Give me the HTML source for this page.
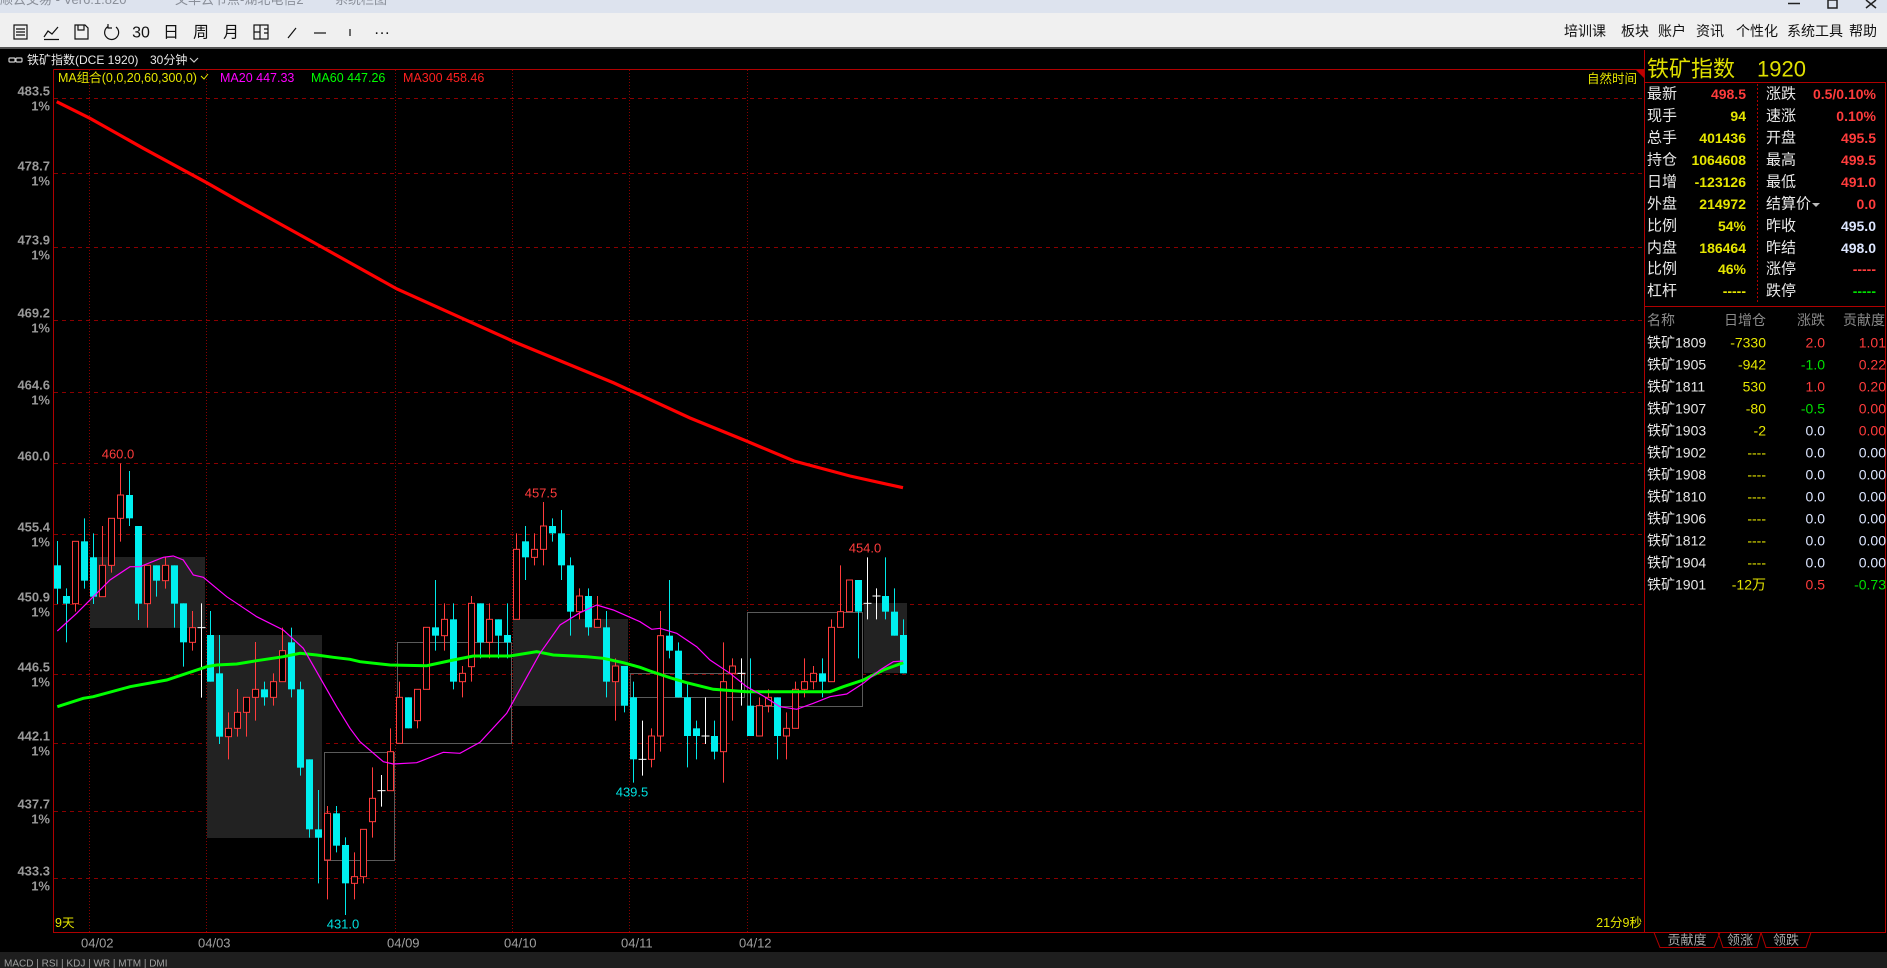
<!DOCTYPE html>
<html><head><meta charset="utf-8"><style>
html,body{margin:0;padding:0;background:#000;overflow:hidden}
svg{display:block}
text{font-family:"Liberation Sans","Noto Sans CJK SC",sans-serif}
</style></head><body>
<svg id="s" width="1887" height="968" viewBox="0 0 1887 968" xmlns="http://www.w3.org/2000/svg">
<rect width="1887" height="968" fill="#000"/>
<rect width="1887" height="13" fill="#dde3ee"/>
<text x="0" y="4" font-size="13" fill="#8a8f99">顺云交易 - Ver6.1.820</text>
<text x="175" y="4" font-size="13" fill="#8a8f99">文华云节点-湖北电信2</text>
<text x="335" y="4" font-size="13" fill="#8a8f99">系统栏图</text>
<g stroke="#222" stroke-width="1.5" fill="none">
<line x1="1788" y1="3.5" x2="1800" y2="3.5"/>
<rect x="1828" y="0" width="9" height="8"/>
<path d="M1866 0 L1876 8 M1876 0 L1866 8"/>
</g>
<rect y="13" width="1887" height="35" fill="#f0f0f0"/>
<rect y="47" width="1887" height="2" fill="#555"/>
<g stroke="#111" stroke-width="1.2" fill="none">
<rect x="14" y="25" width="13" height="14"/><path d="M16 29h9M16 32h9M16 35h9"/>
<path d="M44 37 L48 31 L52 34 L58 27 M44 39.5h15"/>
<path d="M75 25h10l3 3v11h-13z M78 25v5h6v-5"/>
<path d="M116 27 A7 7 0 1 1 108 26.5 M108 24v4h4" />
<rect x="254" y="25" width="14" height="14"/><path d="M260 25v14M260 32h-6M264 29h4M264 33h4"/>
<path d="M288 38 L296 28"/>
<path d="M314 33h12"/>
<path d="M350 29v7"/>
</g>
<g font-size="16" fill="#111" text-anchor="middle" dominant-baseline="central">
<text x="141" y="33">30</text><text x="171" y="33">日</text><text x="201" y="33">周</text><text x="231" y="33">月</text>
<text x="382" y="33">···</text>
</g>
<g font-size="14" fill="#111" dominant-baseline="central">
<text x="1564" y="31">培训课</text><text x="1621" y="31">板块</text><text x="1658" y="31">账户</text><text x="1696" y="31">资讯</text><text x="1736" y="31">个性化</text><text x="1787" y="31">系统工具</text><text x="1849" y="31">帮助</text>
</g>
<g stroke="#ccc" stroke-width="1.2" fill="none"><rect x="9" y="58" width="6" height="4" rx="1"/><rect x="16" y="58" width="6" height="4" rx="1"/><path d="M190 58l4 4 4-4"/></g>
<g font-size="12" fill="#e8e8e8" dominant-baseline="central"><text x="27" y="60">铁矿指数(DCE 1920)</text><text x="150" y="60">30分钟</text></g>
<g id="chart"></g>
<g font-size="12.5" dominant-baseline="central">
<text x="58" y="78" fill="#e6e600">MA组合(0,0,20,60,300,0)</text>
<path d="M201 76l3 3 4-5" stroke="#e6e600" fill="none"/>
<text x="220" y="78" fill="#ff00ff">MA20 447.33</text>
<text x="311" y="78" fill="#00ff00">MA60 447.26</text>
<text x="403" y="78" fill="#ff2020">MA300 458.46</text>
<text x="1587" y="79" fill="#e6e600">自然时间</text>
<text x="1642" y="923" fill="#e6e600" text-anchor="end">21分9秒</text>
<text x="55" y="923" fill="#e6e600">9天</text>
</g>
<path d="M1636 70h8v8z" fill="#c00000"/>
<text x="1647" y="69" font-size="22" fill="#e0e000" dominant-baseline="central">铁矿指数</text>
<text x="1757" y="69" font-size="22" fill="#e0e000" dominant-baseline="central">1920</text>
<g id="panel"></g>
<rect y="952" width="1887" height="16" fill="#1e1e1e"/>
<text x="4" y="964" font-size="10" fill="#a0a0a0" dominant-baseline="central">MACD | RSI | KDJ | WR | MTM | DMI</text>
<g stroke="#b00000" fill="none" stroke-width="1">
<path d="M1654 932.5l6 15h54l6-15M1718 932.5l5 15h34l4-15M1761 932.5l5 15h40l5-15"/>
</g>
<g font-size="13" fill="#aaa" dominant-baseline="central" text-anchor="middle"><text x="1687" y="940">贡献度</text><text x="1740" y="940">领涨</text><text x="1786" y="940">领跌</text></g>
</svg>
<script>
var h=[];
function Y(z){return 440+z/3}
var gl=[98,173,247,320,392,463,534,604,674,743,811,878];
var pl=["483.5","478.7","473.9","469.2","464.6","460.0","455.4","450.9","446.5","442.1","437.7","433.3"];
gl.forEach(function(y,i){h.push('<line x1="54" y1="'+(y+.5)+'" x2="1644" y2="'+(y+.5)+'" stroke="#8a0000" stroke-dasharray="4,4"/>');
h.push('<text x="50" y="'+(y-7)+'" font-size="13" font-weight="bold" fill="#9a9a9a" text-anchor="end" dominant-baseline="central">'+pl[i]+'</text>');
if(i!=5)h.push('<text x="50" y="'+(y+8)+'" font-size="13" font-weight="bold" fill="#9a9a9a" text-anchor="end" dominant-baseline="central">1%</text>');});
var vx=[89,206,395,512,629,747],dl=["04/02","04/03","04/09","04/10","04/11","04/12"];
vx.forEach(function(x,i){h.push('<line x1="'+(x+.5)+'" y1="70" x2="'+(x+.5)+'" y2="932" stroke="#8a0000" stroke-dasharray="1,2"/>');
h.push('<text x="'+(x-8)+'" y="943" font-size="13" fill="#a0a0a0" dominant-baseline="central">'+dl[i]+'</text>');});
[[90,557,115,71,1],[207,635,115,203,1],[513,619,115,87,1],[864,603,43,70,1],[324,752,70,108,0],[397,642,114,101,0],[630,673,114,24,0],[747,612,115,94,0]].forEach(function(b){
if(b[4])h.push('<rect x="'+b[0]+'" y="'+b[1]+'" width="'+b[2]+'" height="'+b[3]+'" fill="#222"/>');
else h.push('<rect x="'+(b[0]+.5)+'" y="'+(b[1]+.5)+'" width="'+b[2]+'" height="'+b[3]+'" fill="none" stroke="#5a5a5a"/>');});
var D="c 376 446 303 492,c 468 491 445 607,r 304 491 304 515,c 304 422 235 446,c 352 470 280 492,r 376 470 258 470,r 235 376 235 398,r 165 235 70 305,c 165 235 93 258,c 258 491 258 540,r 376 491 376 563,c 376 422 376 470,r 376 422 352 446,c 376 491 376 563,c 490 607 490 680,r 563 607 513 632,w 563 563 490 773,c 585 725 513 725,c 700 890 585 912,r 865 890 817 958,r 817 865 747 890,r 772 817 772 890,r 748 772 606 842,c 748 772 725 797,r 725 772 700 797,r 632 725 563 725,c 607 748 563 772,c 748 983 725 1007,c 958 1168 958 1193,c 1168 1193 1050 1330,r 1120 1260 1098 1378,c 1120 1217 1098 1237,c 1215 1330 1192 1425,r 1310 1330 1237 1378,r 1168 1310 1168 1330,r 1075 1145 982 1193,w 1052 1052 1005 1100,r 935 1052 865 1052,r 772 910 725 910,c 772 865 772 865,r 748 842 748 865,r 562 748 562 748,c 562 587 420 632,r 538 587 490 632,c 538 725 490 748,r 700 725 678 772,r 490 680 468 725,c 490 607 490 655,r 538 607 490 655,c 538 587 538 655,c 585 607 490 655,r 328 538 280 538,c 304 352 258 420,r 328 352 280 376,r 258 328 186 376,c 258 280 235 305,c 280 376 210 420,c 376 515 352 587,r 468 515 445 538,c 468 562 445 587,r 538 562 468 562,c 562 725 513 772,r 678 725 655 842,c 678 797 678 817,c 772 958 725 1028,w 958 958 842 1007,r 888 958 865 982,r 587 888 513 935,c 587 632 420 655,c 632 772 607 772,c 772 888 725 982,c 865 888 842 958,w 888 888 772 912,c 888 935 842 958,r 725 935 607 1028,r 678 700 655 842,w 700 700 655 797,c 797 888 655 888,r 797 888 772 888,r 772 797 748 817,c 772 888 772 958,r 865 888 817 958,r 748 865 725 865,r 725 748 655 772,r 700 725 678 748,c 700 725 655 772,r 562 725 538 725,r 515 562 376 562,r 420 515 420 515,c 420 515 420 655,w 490 490 352 538,w 468 468 445 538,c 468 515 352 538,c 515 587 445 587,c 585 700 538 700".split(",");
var cs=[];
D.forEach(function(s,i){var p=s.split(" "),x=Math.round(57.3+9*i)+.5,bt=Y(+p[1]),bb=Y(+p[2]),wt=Y(+p[3]),wb=Y(+p[4]);
if(p[0]=="c"){cs.push('<line x1="'+x+'" y1="'+wt+'" x2="'+x+'" y2="'+wb+'" stroke="#00e8e8"/><rect x="'+(x-3.5)+'" y="'+bt+'" width="7" height="'+Math.max(2,bb-bt)+'" fill="#00f0f0"/>');}
else if(p[0]=="r"){cs.push('<line x1="'+x+'" y1="'+wt+'" x2="'+x+'" y2="'+wb+'" stroke="#ff3c3c"/><rect x="'+(x-3)+'" y="'+bt+'" width="6" height="'+Math.max(1,bb-bt)+'" fill="#000" stroke="#ff3c3c"/>');}
else{cs.push('<line x1="'+x+'" y1="'+wt+'" x2="'+x+'" y2="'+wb+'" stroke="#fff"/><line x1="'+(x-4)+'" y1="'+bt+'" x2="'+(x+4)+'" y2="'+bt+'" stroke="#fff"/>');}});
function pts(arr,bx){var o=[];for(var i=0;i<arr.length;i+=2)o.push((bx+arr[i]/3).toFixed(1)+","+Y(arr[i+1]).toFixed(1));return o.join(" ");}
var g60=pts([22,800,100,775,130,770,240,740,350,720,470,680,500,675,560,672,620,662,700,650,750,640,800,645,850,652,900,658],50)+" "+pts([60,665,150,675,260,677,340,660,400,648,510,648,590,635,640,645,740,650,790,655,850,668,900,682],340)+" "+pts([60,693,120,713,170,728,250,748,350,755,440,755,600,755,640,740,700,720,760,690,820,668],630);
var m20=pts([22,573,80,520,180,420,240,380,270,380,340,352,370,348,400,360,430,405,460,412,530,470,620,530,700,570,760,625,820,730,860,800,900,865],50)+" "+pts([60,905,130,965,160,972,230,968,310,937,360,940,420,907,500,820,550,730,600,640,660,555,720,518,770,495,820,510,900,545],340)+" "+pts([30,545,65,568,90,565,140,580,200,620,240,660,300,700,350,740,400,768,450,800,500,808,550,790,600,770,650,762,700,730,750,690,790,665,820,663],630);
h.push(cs.join(""));
h.push('<polyline points="'+g60+'" fill="none" stroke="#00ff00" stroke-width="3"/>');
h.push('<polyline points="'+m20+'" fill="none" stroke="#ff00ff" stroke-width="1.2"/>');
h.push('<polyline points="56.7,101.7 90,118.3 143.3,148.3 206.7,182.7 240,201.7 320,246 397,289 517,343 614,383 690,418 744,440 794,461 850,476 903,487.7" fill="none" stroke="#ff0000" stroke-width="3.2"/>');
[["460.0",118,454,"#ff3c3c"],["457.5",541,493,"#ff3c3c"],["454.0",865,548,"#ff3c3c"],["439.5",632,792,"#00e0e0"],["431.0",343,924,"#00e0e0"]].forEach(function(t){h.push('<text x="'+t[1]+'" y="'+t[2]+'" font-size="13" fill="'+t[3]+'" text-anchor="middle" dominant-baseline="central">'+t[0]+'</text>');});
h.push('<path d="M53.5 69.5H1644M53.5 69.5V932.5H1644" stroke="#b00000" fill="none"/>');
document.getElementById("chart").innerHTML=h.join("");
var p=[];
p.push('<path d="M1644.5 50V932.5M1885.5 82V932.5M1644 82.5H1886M1644 306.5H1886M1644 932.5H1886" stroke="#b00000" fill="none"/>');
p.push('<line x1="1757.5" y1="84" x2="1757.5" y2="302" stroke="#b00000" stroke-dasharray="2,2"/>');
var L=[["最新","498.5","#ff3c3c","涨跌","0.5/0.10%","#ff3c3c"],["现手","94","#e6e600","速涨","0.10%","#ff3c3c"],["总手","401436","#e6e600","开盘","495.5","#ff3c3c"],["持仓","1064608","#e6e600","最高","499.5","#ff3c3c"],["日增","-123126","#e6e600","最低","491.0","#ff3c3c"],["外盘","214972","#e6e600","结算价","0.0","#ff3c3c"],["比例","54%","#e6e600","昨收","495.0","#dde6ff"],["内盘","186464","#e6e600","昨结","498.0","#dde6ff"],["比例","46%","#e6e600","涨停","-----","#ff3c3c"],["杠杆","-----","#e6e600","跌停","-----","#00e000"]];
var ry=[94,116,138,160,182,204,226,248,269,291];
L.forEach(function(r,i){var y=ry[i];
p.push('<text x="1647" y="'+y+'" font-size="15" fill="#e8e8e8" dominant-baseline="central">'+r[0]+'</text>');
p.push('<text x="1746" y="'+y+'" font-size="14" font-weight="bold" fill="'+r[2]+'" text-anchor="end" dominant-baseline="central">'+r[1]+'</text>');
p.push('<text x="1766" y="'+y+'" font-size="15" fill="#e8e8e8" dominant-baseline="central">'+r[3]+'</text>');
p.push('<text x="1876" y="'+y+'" font-size="14" font-weight="bold" fill="'+r[5]+'" text-anchor="end" dominant-baseline="central">'+r[4]+'</text>');});
p.push('<path d="M1812 203l4 4 4-4z" fill="#bbb"/>');
p.push('<g font-size="14" fill="#8a8a8a" dominant-baseline="central"><text x="1647" y="320">名称</text><text x="1724" y="320">日增仓</text><text x="1797" y="320">涨跌</text><text x="1843" y="320">贡献度</text></g>');
var T=[["1809","-7330","2.0","#ff3c3c","1.01","#ff3c3c"],["1905","-942","-1.0","#00e000","0.22","#ff3c3c"],["1811","530","1.0","#ff3c3c","0.20","#ff3c3c"],["1907","-80","-0.5","#00e000","0.00","#ff3c3c"],["1903","-2","0.0","#dde6ff","0.00","#ff3c3c"],["1902","----","0.0","#dde6ff","0.00","#dde6ff"],["1908","----","0.0","#dde6ff","0.00","#dde6ff"],["1810","----","0.0","#dde6ff","0.00","#dde6ff"],["1906","----","0.0","#dde6ff","0.00","#dde6ff"],["1812","----","0.0","#dde6ff","0.00","#dde6ff"],["1904","----","0.0","#dde6ff","0.00","#dde6ff"],["1901","-12万","0.5","#ff3c3c","-0.73","#00e000"]];
T.forEach(function(r,i){var y=342.7+22*i;
p.push('<text x="1647" y="'+y+'" font-size="14" fill="#e8e8e8" dominant-baseline="central">铁矿'+r[0]+'</text>');
p.push('<text x="1766" y="'+y+'" font-size="14" fill="#e6e600" text-anchor="end" dominant-baseline="central">'+r[1]+'</text>');
p.push('<text x="1825" y="'+y+'" font-size="14" fill="'+r[3]+'" text-anchor="end" dominant-baseline="central">'+r[2]+'</text>');
p.push('<text x="1886" y="'+y+'" font-size="14" fill="'+r[5]+'" text-anchor="end" dominant-baseline="central">'+r[4]+'</text>');});
document.getElementById("panel").innerHTML=p.join("");
</script>
</body></html>
